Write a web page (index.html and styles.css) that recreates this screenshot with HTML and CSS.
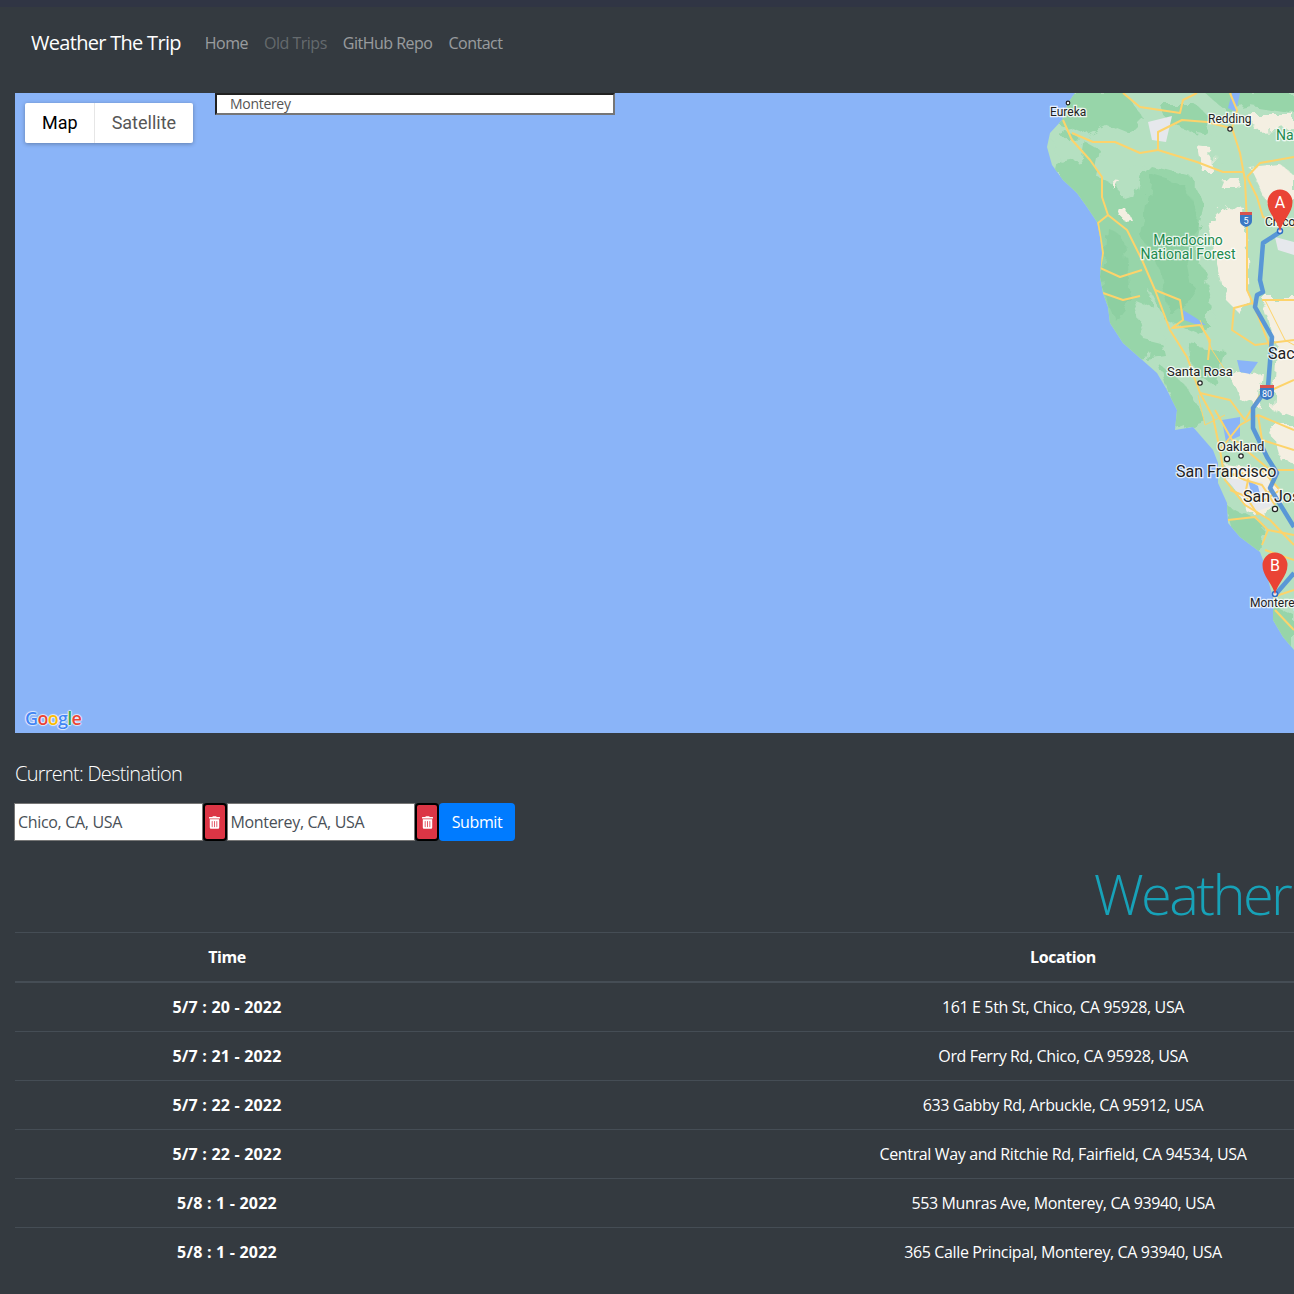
FILE: index.html
```html
<!DOCTYPE html>
<html lang="en">
<head>
    <meta charset="UTF-8">
    <meta name="viewport" content="width=device-width, initial-scale=1.0">
    <title>Weather The Trip</title>
    <link rel="stylesheet" href="styles.css">
</head>
<body>
    <div class="top-strip"></div>
    <nav class="navbar">
        <a class="brand" href="#">Weather The Trip</a>
        <a class="nav-link" href="#">Home</a>
        <a class="nav-link disabled" href="#">Old Trips</a>
        <a class="nav-link" href="#">GitHub Repo</a>
        <a class="nav-link" href="#">Contact</a>
    </nav>

    <main class="content">
        <div class="map">
            <svg class="map-art" width="1279" height="640" viewBox="15 93 1279 640">
                <defs>
                    <clipPath id="coast">
                        <path d="M1075 93 L1068 103 L1062 120 L1050 133 L1047 147 L1052 165 L1063 180 L1077 193 L1087 207 L1097 222 L1100 237 L1102 253 L1100 277 L1103 293 L1108 307 L1110 323 L1123 343 L1140 358 L1157 373 L1167 390 L1177 410 L1175 430 L1193 427 L1213 450 L1218 463 L1218 483 L1227 503 L1228 523 L1240 537 L1260 552 L1263 560 L1270 587 L1273 597 L1273 620 L1283 637 L1294 650 L1294 93 Z"/>
                    </clipPath>
                    <filter id="rough" x="-10%" y="-10%" width="120%" height="120%">
                        <feTurbulence type="fractalNoise" baseFrequency="0.07" numOctaves="3" seed="4"/>
                        <feDisplacementMap in="SourceGraphic" scale="16"/>
                    </filter>
                </defs>

                <!-- land -->
                <path class="land" d="M1075 93 L1068 103 L1062 120 L1050 133 L1047 147 L1052 165 L1063 180 L1077 193 L1087 207 L1097 222 L1100 237 L1102 253 L1100 277 L1103 293 L1108 307 L1110 323 L1123 343 L1140 358 L1157 373 L1167 390 L1177 410 L1175 430 L1193 427 L1213 450 L1218 463 L1218 483 L1227 503 L1228 523 L1240 537 L1260 552 L1263 560 L1270 587 L1273 597 L1273 620 L1283 637 L1294 650 L1294 93 Z"/>

                <g clip-path="url(#coast)">
                    <g filter="url(#rough)">
                        <!-- coast range -->
                        <path class="forest" d="M1060 93 H1125 L1145 120 L1130 135 L1105 125 L1085 135 L1060 125 Z"/>
                        <path class="forest" d="M1065 130 L1100 150 L1095 175 L1125 190 L1150 165 L1190 175 L1205 205 L1195 250 L1215 300 L1200 335 L1165 320 L1150 290 L1165 355 L1130 360 L1095 300 L1085 225 L1055 175 Z"/>
                        <path class="forest" d="M1160 105 H1195 L1215 120 L1200 135 L1170 125 Z"/>
                        <path class="forest" d="M1205 93 H1294 V112 L1250 105 L1225 110 Z"/>
                        <path class="forest" d="M1190 345 L1225 350 L1215 385 L1195 375 Z"/>
                        <path class="forest" d="M1160 365 L1185 385 L1205 420 L1178 430 Z"/>
                        <path class="forest" d="M1225 505 L1265 525 L1262 555 L1235 540 Z"/>
                        <path class="forest" d="M1272 605 L1294 615 V660 L1272 640 Z"/>
                        <path class="forest-dark" d="M1150 175 L1185 185 L1200 225 L1185 245 L1195 300 L1170 315 L1160 270 L1140 235 Z"/>
                        <path class="forest-dark" d="M1105 225 L1125 240 L1130 300 L1115 320 L1100 285 Z"/>

                        <!-- lighter patches inside the forest -->
                        <path class="land" d="M1052 140 L1085 138 L1082 158 L1060 162 Z"/>
                        <path class="land" d="M1118 175 L1145 165 L1135 200 L1120 195 Z"/>
                        <path class="land" d="M1135 300 L1160 310 L1165 345 L1145 340 Z"/>
                        <path class="land" d="M1195 130 L1225 135 L1225 165 L1200 155 Z"/>
                        <path class="land" d="M1200 225 L1225 220 L1235 300 L1215 320 L1205 280 Z"/>

                        <!-- valley -->
                        <path class="cream" d="M1208 222 L1226 205 L1244 208 L1248 300 L1238 312 L1226 300 L1216 260 Z"/>
                        <path class="cream" d="M1198 148 L1213 150 L1214 172 L1203 172 Z"/>
                        <path class="cream" d="M1220 177 L1240 178 L1238 190 L1224 190 Z"/>
                        <path class="cream" d="M1250 168 L1280 165 L1294 175 L1294 200 L1268 205 Z"/>
                        <path class="cream" d="M1248 114 H1294 V128 L1255 130 Z"/>
                        <path class="cream" d="M1262 298 H1300 V420 L1272 410 L1276 345 Z"/>
                        <path class="cream" d="M1112 180 L1120 181 L1114 190 Z"/>
                        <path class="cream" d="M1118 208 L1126 209 L1130 218 L1122 219 Z"/>
                        <path class="cream" d="M1230 375 L1262 372 L1258 405 L1240 400 Z"/>
                        <path class="cream" d="M1270 425 H1300 V465 L1280 460 Z"/>
                        <path class="cream" d="M1225 465 L1265 470 L1285 505 L1250 515 Z"/>
                    </g>

                    <path class="grey" d="M1148 122 L1172 116 L1166 142 L1152 140 Z"/>
                    <path class="grey" d="M1275 237 L1294 242 V255 L1278 250 Z"/>
                    <path class="grey" d="M1225 478 L1262 482 L1275 505 L1255 512 Z"/>
                    <path class="water" d="M1222 420 L1240 417 L1240 436 L1226 442 Z"/>
                    <path class="water" d="M1183 310 L1196 318 L1206 325 L1195 324 L1184 320 Z"/>
                    <path class="water" d="M1248 480 L1258 486 L1262 502 L1252 496 Z"/>
                    <path class="water" d="M1232 93 L1240 93 L1236 112 L1228 108 Z"/>
                    <path class="water" d="M1237 360 L1258 362 L1250 374 L1240 372 Z"/>

                    <!-- roads -->
                    <path class="road" d="M1230 93 L1237 110 L1232 128 L1240 153 L1245 180 L1247 223 L1247 290 L1253 303 L1270 347"/>
                    <path class="road" d="M1063 120 L1072 140 L1090 160 L1102 177 L1102 197 L1108 215 L1127 230 L1142 260 L1155 290 L1170 330 L1187 357 L1200 393 L1213 417 L1220 450"/>
                    <path class="road" d="M1072 133 L1093 142 L1115 142 L1140 153 L1158 150 L1158 132 L1182 120 L1207 122 L1230 128"/>
                    <path class="road" d="M1158 150 L1197 162 L1223 172 L1243 172"/>
                    <path class="road" d="M1108 215 L1098 223 L1103 253 L1100 268 L1120 277 L1142 270"/>
                    <path class="road" d="M1103 293 L1123 300 L1140 296"/>
                    <path class="road" d="M1123 93 L1140 107 L1180 113 L1183 100 L1197 93"/>
                    <path class="road" d="M1247 177 L1260 163 L1294 157"/>
                    <path class="road" d="M1247 177 L1257 197 L1263 217 L1294 227"/>
                    <path class="road" d="M1155 290 L1180 300 L1183 320 L1172 328 L1200 325 L1210 340 L1208 360"/>
                    <path class="road" d="M1253 303 L1234 308 L1232 330 L1255 345 L1294 340"/>
                    <path class="road" d="M1262 300 H1294"/>
                    <path class="road" d="M1200 393 L1230 400 L1245 420 L1260 395 L1294 380"/>
                    <path class="road" d="M1220 450 L1225 480 L1245 505 L1270 520 L1294 545"/>
                    <path class="road" d="M1220 450 L1240 425 L1258 415 L1294 430"/>
                    <path class="road" d="M1232 475 L1262 470 L1280 490 L1265 500 L1245 492"/>
                    <path class="road" d="M1240 445 L1270 470 L1294 470"/>
                    <path class="road" d="M1228 520 L1255 517 L1268 530"/>
                    <path class="road" d="M1262 545 L1268 530 L1294 535"/>
                    <path class="road" d="M1224 470 L1245 480 L1262 485 L1275 505"/>
                    <path class="road" d="M1230 490 L1255 500 L1272 490"/>
                    <path class="road" d="M1250 470 L1245 495 L1258 515"/>
                    <path class="road" d="M1215 410 L1232 440 L1245 445"/>
                    <path class="road" d="M1258 415 L1262 440 L1294 450"/>
                    <path class="road" d="M1273 597 L1294 590"/>
                    <path class="road" d="M1275 610 L1294 630"/>
                    <path class="road" d="M1265 550 L1294 560"/>
                    <path class="road thin" d="M1265 300 L1285 340 L1294 345"/>
                    <path class="road thin" d="M1200 320 L1212 350 L1225 370"/>
                    <path class="road thin" d="M1198 395 L1205 425 L1225 415"/>
                </g>

                <!-- route -->
                <path class="route" d="M1280 232 L1263 243 L1260 280 L1263 292 L1257 295 L1255 307 L1272 337 L1268 387 L1253 408 L1253 428 L1267 457 L1277 473 L1270 488 L1294 527"/>
                <path class="route" d="M1294 573 L1275 595"/>

                <!-- cities -->
                <circle class="city" cx="1230" cy="129" r="2.2"/>
                <circle class="city" cx="1068" cy="103" r="1.8"/>
                <circle class="city" cx="1200" cy="383" r="2.2"/>
                <circle class="city" cx="1227" cy="459" r="2.6"/>
                <circle class="city" cx="1241" cy="456" r="2.2"/>
                <circle class="city" cx="1275" cy="509" r="2.6"/>

                <!-- shields -->
                <path class="shield" d="M1240 213 H1252 V221 Q1252 225 1246 227 Q1240 225 1240 221 Z"/>
                <path class="shield-top" d="M1240 212 H1252 V215 H1240 Z"/>
                <text class="shield-text" x="1246" y="224">5</text>
                <path class="shield" d="M1260 386 H1274 V394 Q1274 398 1267 400 Q1260 398 1260 394 Z"/>
                <path class="shield-top" d="M1260 385 H1274 V388 H1260 Z"/>
                <text class="shield-text" x="1267" y="397">80</text>

                <!-- labels -->
                <text class="label small" x="1050" y="116">Eureka</text>
                <text class="label small" x="1208" y="123">Redding</text>
                <text class="label green" x="1276" y="140">Na</text>
                <text class="label green mid" x="1188" y="245">Mendocino</text>
                <text class="label green mid" x="1188" y="259">National Forest</text>
                <text class="label small" x="1265" y="226">Chico</text>
                <text class="label big" x="1268" y="359">Sac</text>
                <text class="label" x="1167" y="376">Santa Rosa</text>
                <text class="label" x="1217" y="451">Oakland</text>
                <text class="label big" x="1176" y="477">San Francisco</text>
                <text class="label big" x="1243" y="502">San Jose</text>
                <text class="label small" x="1250" y="607">Monterey</text>

                <!-- pins -->
                <circle class="route-end" cx="1280" cy="231" r="2.5"/>
                <path class="pin" d="M1280 232 C1278 220 1267.500 214 1267.500 202 A12.500 12.500 0 0 1 1292.500 202 C1292.500 214 1282 220 1280 232 Z"/>
                <text class="pin-text" x="1280" y="208">A</text>
                <circle class="route-end" cx="1275" cy="594" r="2.5"/>
                <path class="pin" d="M1275 595 C1273 583 1262.500 577 1262.500 565 A12.500 12.500 0 0 1 1287.500 565 C1287.500 577 1277 583 1275 595 Z"/>
                <text class="pin-text" x="1275" y="571">B</text>
            </svg>

            <div class="map-type">
                <span class="map-type-btn active">Map</span>
                <span class="map-type-btn">Satellite</span>
            </div>
            <input class="map-search" type="text" value="Monterey">
            <div class="google-logo"><span class="g-blue">G</span><span class="g-red">o</span><span class="g-yellow">o</span><span class="g-blue">g</span><span class="g-green">l</span><span class="g-red">e</span></div>
        </div>

        <p class="current">Current: Destination</p>

        <form class="trip-form">
            <input class="place-input" type="text" value="Chico, CA, USA">
            <button class="delete-btn" type="button">
                <svg class="trash" viewBox="0 0 448 512"><path d="M32 464a48 48 0 0 0 48 48h288a48 48 0 0 0 48-48V128H32zm272-256a16 16 0 0 1 32 0v224a16 16 0 0 1-32 0zm-96 0a16 16 0 0 1 32 0v224a16 16 0 0 1-32 0zm-96 0a16 16 0 0 1 32 0v224a16 16 0 0 1-32 0zM432 32H312l-9.4-18.700A24 24 0 0 0 281.100 0H166.800a23.720 23.720 0 0 0-21.400 13.300L136 32H16A16 16 0 0 0 0 48v32a16 16 0 0 0 16 16h416a16 16 0 0 0 16-16V48a16 16 0 0 0-16-16z"/></svg>
            </button>
            <input class="place-input" type="text" value="Monterey, CA, USA">
            <button class="delete-btn" type="button">
                <svg class="trash" viewBox="0 0 448 512"><path d="M32 464a48 48 0 0 0 48 48h288a48 48 0 0 0 48-48V128H32zm272-256a16 16 0 0 1 32 0v224a16 16 0 0 1-32 0zm-96 0a16 16 0 0 1 32 0v224a16 16 0 0 1-32 0zm-96 0a16 16 0 0 1 32 0v224a16 16 0 0 1-32 0zM432 32H312l-9.4-18.700A24 24 0 0 0 281.100 0H166.800a23.720 23.720 0 0 0-21.400 13.300L136 32H16A16 16 0 0 0 0 48v32a16 16 0 0 0 16 16h416a16 16 0 0 0 16-16V48a16 16 0 0 0-16-16z"/></svg>
            </button>
            <button class="submit-btn" type="submit">Submit</button>
        </form>

        <h1 class="weather-title">Weather</h1>

        <table class="weather-table">
            <colgroup>
                <col class="col-time">
                <col class="col-location">
                <col>
            </colgroup>
            <thead>
                <tr><th>Time</th><th>Location</th><th></th></tr>
            </thead>
            <tbody>
                <tr><th>5/7 : 20 - 2022</th><td>161 E 5th St, Chico, CA 95928, USA</td><td></td></tr>
                <tr><th>5/7 : 21 - 2022</th><td>Ord Ferry Rd, Chico, CA 95928, USA</td><td></td></tr>
                <tr><th>5/7 : 22 - 2022</th><td>633 Gabby Rd, Arbuckle, CA 95912, USA</td><td></td></tr>
                <tr><th>5/7 : 22 - 2022</th><td>Central Way and Ritchie Rd, Fairfield, CA 94534, USA</td><td></td></tr>
                <tr><th>5/8 : 1 - 2022</th><td>553 Munras Ave, Monterey, CA 93940, USA</td><td></td></tr>
                <tr><th>5/8 : 1 - 2022</th><td>365 Calle Principal, Monterey, CA 93940, USA</td><td></td></tr>
            </tbody>
        </table>
    </main>
</body>
</html>
```

FILE: styles.css
```css
html, body {
    overflow-x: hidden;
}
body {
    margin: 0;
    background-color: #343a40;
    color: #fff;
    font-family: "Open Sans", "Noto Sans", sans-serif;
    font-size: 16px;
    line-height: 1.5;
    letter-spacing: -0.4px;
}
.top-strip {
    height: 7px;
    background-color: #303544;
}
.navbar {
    display: flex;
    align-items: center;
    height: 72px;
    padding-left: 31px;
}
.brand {
    margin-right: 16px;
    font-size: 20px;
    letter-spacing: -0.7px;
    color: #fff;
    text-decoration: none;
}
.nav-link {
    padding: 8px;
    letter-spacing: -0.5px;
    color: rgba(255, 255, 255, 0.5);
    text-decoration: none;
}
.nav-link.disabled {
    color: rgba(255, 255, 255, 0.25);
}
.content {
    width: 2354px;
    margin-top: 14px;
    margin-left: 15px;
}

/* map */
.map {
    position: relative;
    height: 640px;
    overflow: hidden;
    background-color: #8ab4f8;
}
.map-art {
    display: block;
    font-family: Roboto, sans-serif;
    letter-spacing: 0;
}
.land { fill: #b5e0c1; }
.forest { fill: #97d5a9; }
.forest-dark { fill: #8dcfa1; }
.cream { fill: #f4efe2; }
.grey { fill: #e6e8ec; }
.water { fill: #8ab4f8; }
.road {
    fill: none;
    stroke: #fdd36b;
    stroke-width: 2;
    stroke-linejoin: round;
}
.road.thin { stroke-width: 1; }
.route {
    fill: none;
    stroke: #4f8fd8;
    stroke-width: 4.5;
    stroke-linejoin: round;
    stroke-opacity: 0.9;
}
.route-end {
    fill: #fff;
    stroke: #2f6fc4;
    stroke-width: 1.5;
}
.city {
    fill: #fff;
    stroke: #222;
    stroke-width: 1.2;
}
.shield { fill: #3b78c4; }
.shield-top { fill: #d9534f; }
.shield-text {
    fill: #fff;
    font-size: 9px;
    text-anchor: middle;
}
.label {
    fill: #222;
    stroke: #fff;
    stroke-width: 2.5px;
    stroke-opacity: 0.8;
    paint-order: stroke;
    font-size: 13px;
}
.label.small { font-size: 12px; }
.label.big { font-size: 16px; }
.label.green {
    fill: #1e8a4e;
    font-size: 14px;
}
.label.mid { text-anchor: middle; }
.pin { fill: #ea4335; }
.pin-text {
    fill: #fff;
    font-size: 16px;
    text-anchor: middle;
}
.map-type {
    position: absolute;
    top: 10px;
    left: 10px;
    display: flex;
    height: 40px;
    border-radius: 2px;
    background-color: #fff;
    box-shadow: 0 1px 4px rgba(0, 0, 0, 0.3);
    font-family: Roboto, sans-serif;
    font-size: 18px;
    line-height: 40px;
    letter-spacing: 0;
}
.map-type-btn {
    padding: 0 17px;
    color: #565656;
}
.map-type-btn.active {
    padding-right: 16px;
    border-right: 1px solid #e6e6e6;
    color: #000;
}
.map-search {
    position: absolute;
    top: 0;
    left: 200px;
    box-sizing: border-box;
    width: 400px;
    height: 22px;
    padding: 0 13px 2px;
    border: 2px inset #767676;
    font-family: inherit;
    font-size: 14px;
    color: #555;
    letter-spacing: -0.3px;
}
.google-logo {
    position: absolute;
    bottom: 1px;
    left: 10px;
    font-family: "Open Sans", sans-serif;
    font-size: 18px;
    font-weight: 600;
    letter-spacing: -0.7px;
    text-shadow: 1px 0 1px rgba(255, 255, 255, 0.7), -1px 0 1px rgba(255, 255, 255, 0.7), 0 1px 1px rgba(255, 255, 255, 0.7), 0 -1px 1px rgba(255, 255, 255, 0.7);
}
.g-blue { color: #4285f4; }
.g-red { color: #ea4335; }
.g-yellow { color: #fbbc05; }
.g-green { color: #34a853; }

/* form */
.current {
    margin: 26px 0 14px;
    font-size: 20px;
    font-weight: 300;
    letter-spacing: -0.75px;
}
.trip-form {
    display: flex;
    height: 38px;
    margin-left: -1px;
}
.place-input {
    box-sizing: border-box;
    width: 188.5px;
    height: 38px;
    padding: 0 3px;
    border: 1px solid #767676;
    font-family: inherit;
    font-size: 16px;
    color: #495057;
    letter-spacing: -0.33px;
}
.delete-btn {
    display: flex;
    align-items: center;
    justify-content: center;
    box-sizing: border-box;
    width: 24px;
    height: 38px;
    padding: 0;
    border: 2px solid #000;
    border-radius: 4px;
    background-color: #dc3545;
}
.trash {
    width: 11px;
    height: 13px;
    fill: #fff;
}
.submit-btn {
    width: 76px;
    height: 38px;
    border: none;
    border-radius: 4px;
    background-color: #007bff;
    color: #fff;
    font-family: inherit;
    font-size: 16px;
    letter-spacing: -0.4px;
}

/* weather table */
.weather-title {
    margin: 19px 0 5px;
    font-size: 56px;
    font-weight: 300;
    line-height: 1.2;
    letter-spacing: -2.6px;
    color: #17a2b8;
    text-align: center;
}
.weather-table {
    width: 100%;
    table-layout: fixed;
    border-collapse: collapse;
}
.col-time { width: 424px; }
.col-location { width: 1248px; }
.weather-table th,
.weather-table td {
    padding: 12px;
    border-top: 1px solid #454d55;
    text-align: center;
}
.weather-table thead th {
    border-bottom: 2px solid #454d55;
}
.weather-table tbody th {
    letter-spacing: 0.2px;
}
.weather-table td {
    letter-spacing: -0.37px;
}
```
